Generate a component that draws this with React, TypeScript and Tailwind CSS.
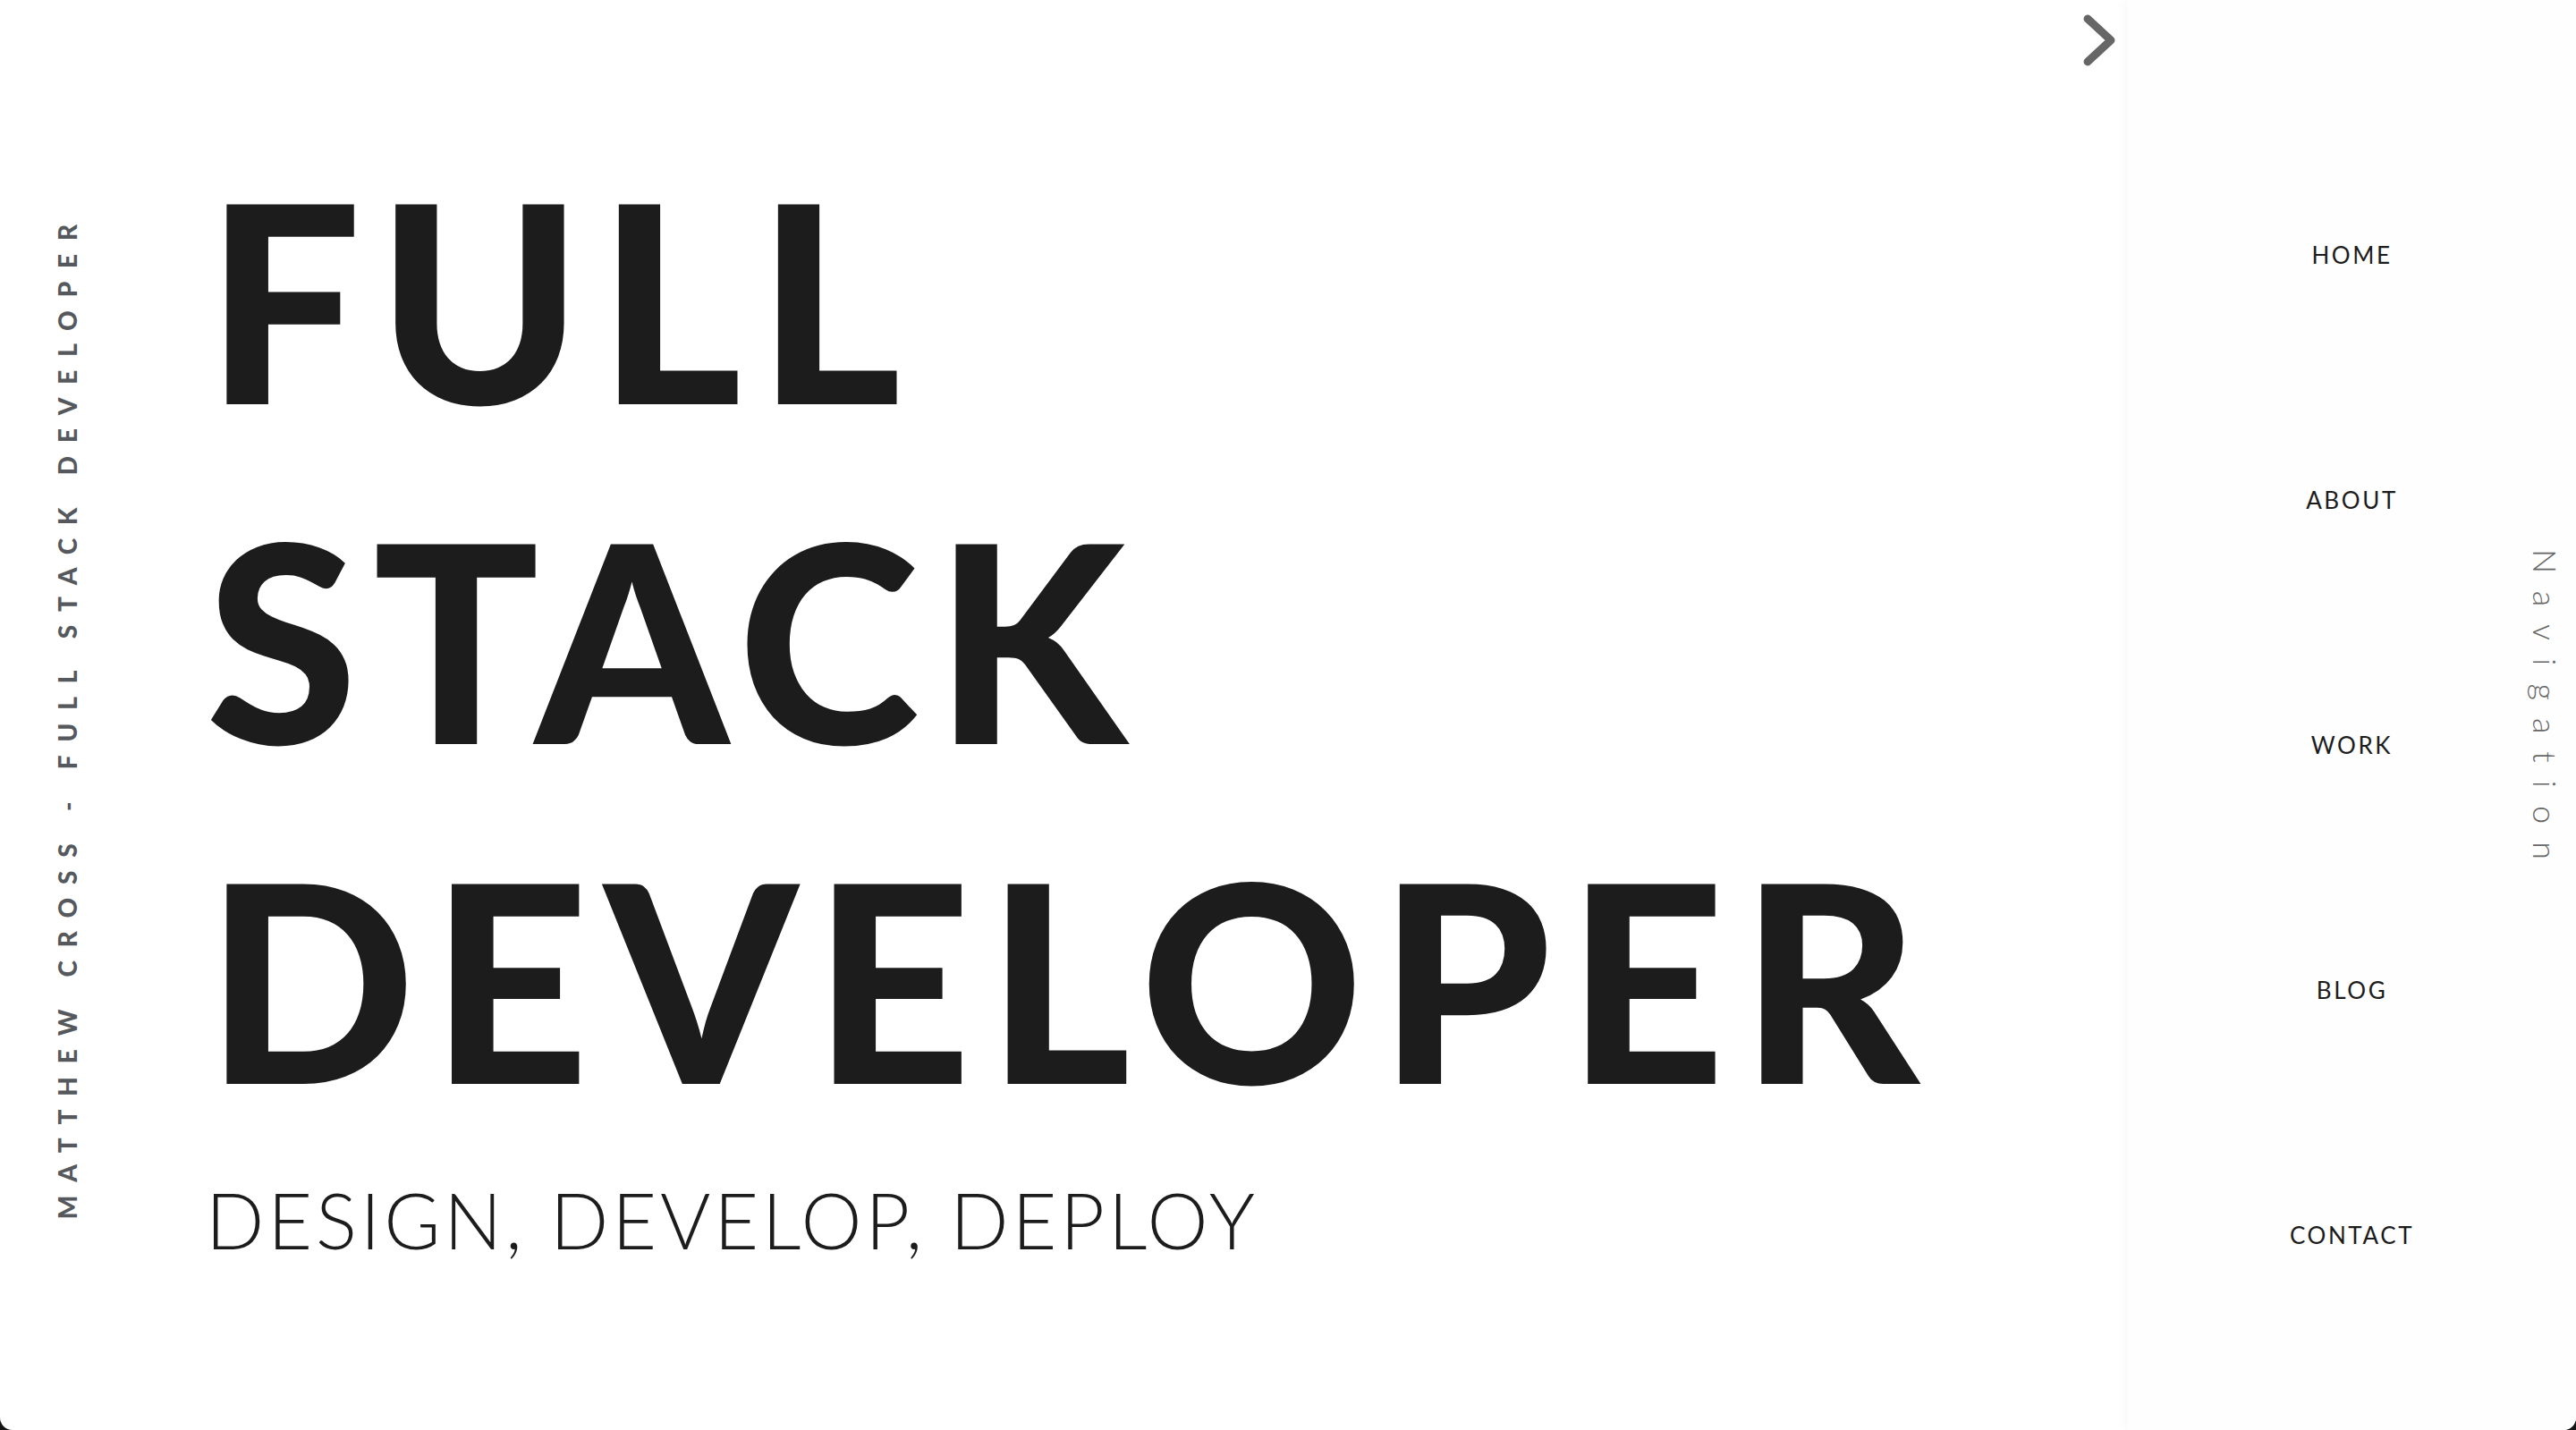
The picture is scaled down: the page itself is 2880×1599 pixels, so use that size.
import React from "react";

const navItems = ["HOME", "ABOUT", "WORK", "BLOG", "CONTACT"];

export default function App() {
  return (
    <div className="h-[1599px] w-[2880px] bg-[#141414]">
      <div className="flex h-full w-full overflow-hidden rounded-b-[14px] bg-white">
        <main className="relative flex flex-1">
          <aside className="flex w-[150px] shrink-0 items-center justify-center">
            <span className="rotate-180 whitespace-nowrap font-['Lato',sans-serif] text-[28px] font-black leading-none tracking-[0.53em] text-[#55595d] [writing-mode:vertical-rl]">
              MATTHEW CROSS - FULL STACK DEVELOPER
            </span>
          </aside>
          <div className="flex flex-col pl-[80px] pt-[143px]">
            <h1 className="font-['Lato',sans-serif] text-[308px] font-black leading-[380px] tracking-[0.056em] text-[#1c1c1c]">
              FULL
              <br />
              STACK
              <br />
              DEVELOPER
            </h1>
            <p className="mt-[38px] font-['Lato',sans-serif] text-[86px] font-light leading-[86px] tracking-[0.045em] text-[#1c1c1c]">
              DESIGN, DEVELOP, DEPLOY
            </p>
          </div>
          <button className="absolute right-[10px] top-[12px]" aria-label="Toggle navigation">
            <svg width="44" height="66" viewBox="0 0 44 66" fill="none">
              <path
                d="M9 9 L35 33 L9 57"
                stroke="#666666"
                strokeWidth="9"
                strokeLinecap="round"
                strokeLinejoin="round"
              />
            </svg>
          </button>
        </main>
        <nav className="flex w-[501px] shrink-0 bg-[#fefefe] shadow-[-6px_0_10px_rgba(0,0,0,0.025)]">
          <div className="w-[78px] shrink-0" />
          <ul className="flex flex-1 flex-col pt-[148px]">
            {navItems.map((item) => (
              <li key={item} className="flex h-[274px] items-center justify-center">
                <a className="font-['Lato',sans-serif] text-[26px] font-normal tracking-[0.1em] text-[#1c1c1c]">
                  {item}
                </a>
              </li>
            ))}
          </ul>
          <div className="flex w-[78px] shrink-0 items-center justify-center pb-[4px] pl-[10px]">
            <span className="whitespace-nowrap font-['Lato',sans-serif] text-[36px] font-light leading-none tracking-[0.56em] text-[#666666] [writing-mode:vertical-rl]">
              Navigation
            </span>
          </div>
        </nav>
      </div>
    </div>
  );
}
